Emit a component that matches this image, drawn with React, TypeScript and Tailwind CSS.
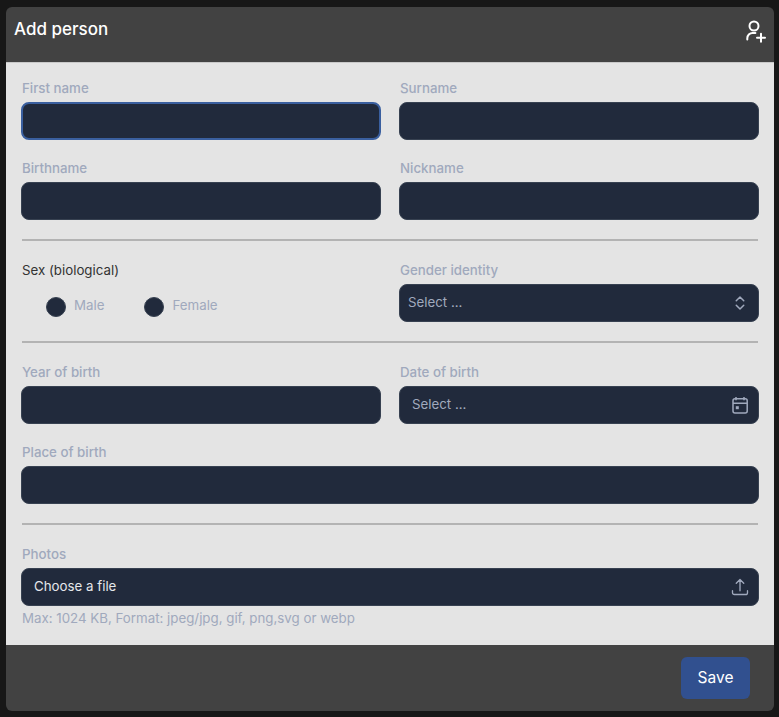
import React from 'react';
import { ChevronsUpDown } from 'lucide-react';

const labelCls = 'block h-5 mb-1 ml-px text-[13.3px] leading-5 font-medium text-[#a0a9bd]';
const inputCls = 'block w-full h-[38px] rounded-lg bg-[#212a3c] border border-[#374151]';

const TextField = ({ label, focused }: { label: string; focused?: boolean }) => (
    <div>
        <label className={labelCls}>{label}</label>
        <input
            type="text"
            className={focused ? 'block w-full h-[38px] rounded-lg bg-[#212a3c] border-2 border-[#3a5f9f] outline-none' : inputCls}
        />
    </div>
);

const Radio = ({ label }: { label: string }) => (
    <div className="flex items-center gap-2">
        <span className="w-5 h-5 rounded-full bg-[#212a3c] border border-[#374151]" />
        <span className="mb-1 text-[13.3px] leading-5 text-[#a0a9bd]">{label}</span>
    </div>
);

const Divider = () => <hr className="border-0 h-0.5 bg-[#b3b3b3] mx-px" />;

const AddUserIcon = () => (
    <svg width="22" height="24" viewBox="0 0 22 24" fill="none" stroke="currentColor" strokeWidth="2" strokeLinecap="round" className="mt-[12px] text-white">
        <circle cx="9" cy="7" r="4.5" />
        <path d="M2.3 20.5v-1.2c0-3 2.3-5.3 5.3-5.3h2.8" />
        <path d="M16 14.7v8M12 18.7h8" />
    </svg>
);

const CalendarIcon = () => (
    <svg width="20" height="20" viewBox="0 0 20 20" fill="none" stroke="currentColor" strokeWidth="1.5" className="text-[#a0a9bd]">
        <rect x="3" y="3.7" width="14.2" height="14.3" rx="2" />
        <path d="M3 8.3h14.2M6 2v3.2M14 2v3.2" />
        <rect x="5.8" y="11.2" width="3" height="3" fill="currentColor" stroke="none" />
    </svg>
);

const TrayIcon = () => (
    <svg width="20" height="20" viewBox="0 0 24 24" fill="none" stroke="currentColor" strokeWidth="1.6" strokeLinecap="round" strokeLinejoin="round" className="text-[#a0a9bd]">
        <path d="M3 16.5v2.25A2.25 2.25 0 0 0 5.25 21h13.5A2.25 2.25 0 0 0 21 18.75V16.5m-13.5-9L12 3m0 0 4.5 4.5M12 3v13.5" />
    </svg>
);

export default function App() {
    return (
        <div className="h-[717px] bg-[#171717] pl-1.5 pr-[5px] pt-[7px] pb-1.5 font-['Inter',sans-serif]">
            <div className="h-[704px] flex flex-col rounded-md overflow-hidden">
                <div className="h-14 shrink-0 flex justify-between bg-[#424242] border-b border-[#c9c9c9] pl-2 pr-[7px]">
                    <h2 className="mt-[11px] text-[17px] leading-[22px] font-medium text-white">Add person</h2>
                    <AddUserIcon />
                </div>

                <div className="flex-1 bg-[#e4e4e4] px-[15px] pt-[15px]">
                    <div className="grid grid-cols-2 gap-[18px]">
                        <TextField label="First name" focused />
                        <TextField label="Surname" />
                        <TextField label="Birthname" />
                        <TextField label="Nickname" />
                    </div>

                    <div className="my-[19px]">
                        <Divider />
                    </div>

                    <div className="grid grid-cols-2 gap-x-[18px]">
                        <div>
                            <div className="h-5 ml-px text-[13.3px] leading-5 text-[#333333]">Sex (biological)</div>
                            <div className="flex gap-10 mt-[15px] ml-[25px]">
                                <Radio label="Male" />
                                <Radio label="Female" />
                            </div>
                        </div>
                        <div>
                            <label className={labelCls}>Gender identity</label>
                            <div className="flex items-center justify-between h-[38px] rounded-lg bg-[#212a3c] border border-[#374151] pl-2 pr-[9px]">
                                <span className="text-[13.3px] text-[#a0a9bd]">Select ...</span>
                                <ChevronsUpDown size={18} className="text-[#a0a9bd]" />
                            </div>
                        </div>
                    </div>

                    <div className="my-[19px]">
                        <Divider />
                    </div>

                    <div className="grid grid-cols-2 gap-[18px]">
                        <TextField label="Year of birth" />
                        <div>
                            <label className={labelCls}>Date of birth</label>
                            <div className="flex items-center justify-between h-[38px] rounded-lg bg-[#212a3c] border border-[#374151] pl-3 pr-2">
                                <span className="text-[13.3px] text-[#a0a9bd]">Select ...</span>
                                <CalendarIcon />
                            </div>
                        </div>
                        <div className="col-span-2">
                            <TextField label="Place of birth" />
                        </div>
                    </div>

                    <div className="my-[19px]">
                        <Divider />
                    </div>

                    <label className={labelCls}>Photos</label>
                    <div className="flex items-center justify-between h-[38px] rounded-lg bg-[#212a3c] border border-[#374151] pl-3 pr-2">
                        <span className="text-[13.3px] text-[#e5e7eb]">Choose a file</span>
                        <TrayIcon />
                    </div>
                    <p className="mt-0.5 ml-px text-[13.3px] leading-5 text-[#a0a9bd]">Max: 1024 KB, Format: jpeg/jpg, gif, png,svg or webp</p>
                </div>

                <div className="h-[66px] shrink-0 flex items-center justify-end bg-[#424242] pr-6">
                    <button className="w-[69px] h-[42px] rounded-md bg-[#31508f] text-white text-[15.5px]">Save</button>
                </div>
            </div>
        </div>
    );
}
